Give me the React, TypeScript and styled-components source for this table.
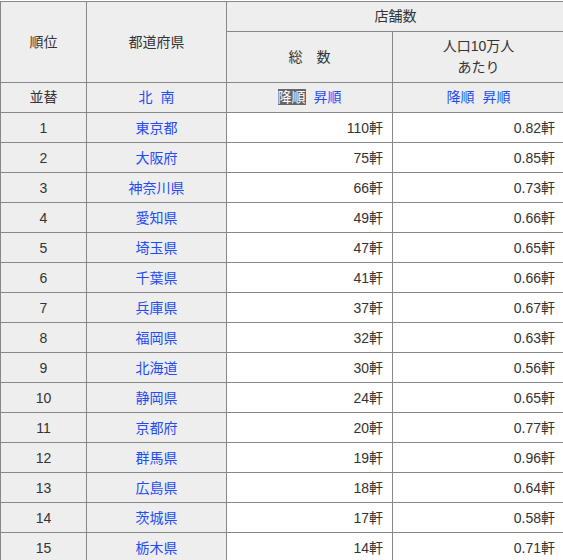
import React from "react";
import styled, { createGlobalStyle } from "styled-components";

const Global = createGlobalStyle`
  html, body { margin: 0; padding: 0; background: #fff; overflow: hidden; }
  body { font-family: "Liberation Sans", "Noto Sans CJK JP", sans-serif; font-size: 14px; line-height: 20px; color: #333; }
`;

const Wrap = styled.div`
  padding-top: 1px;
  width: 600px;
`;

const Table = styled.table`
  border-collapse: collapse;
  width: 565px;
  table-layout: fixed;
  border: 1px solid #888;
`;

const Row = styled.tr<{ $h: number }>`
  height: ${(p) => p.$h}px;
`;

const Th = styled.th`
  background: #eee;
  border: 1px solid #888;
  font-weight: normal;
  text-align: center;
  vertical-align: middle;
  padding: 0;
  line-height: 21px;
`;

const Td = styled.td<{ $gray?: boolean; $right?: boolean }>`
  background: ${(p) => (p.$gray ? "#eee" : "#fff")};
  border: 1px solid #888;
  text-align: ${(p) => (p.$right ? "right" : "center")};
  padding: ${(p) => (p.$right ? "0 9px 0 0" : "0")};
  line-height: 18px;
  vertical-align: middle;
`;

const SortLink = styled.a<{ $active?: boolean }>`
  color: ${(p) => (p.$active ? "#fff" : "#1e4cf5")};
  background: ${(p) => (p.$active ? "#666" : "transparent")};
  text-decoration: none;
  margin: 0 4px;
  cursor: pointer;
`;

const PrefLink = styled.a`
  color: #1e4cf5;
  text-decoration: none;
`;

const data: [string, number, string][] = [
  ["東京都", 110, "0.82"],
  ["大阪府", 75, "0.85"],
  ["神奈川県", 66, "0.73"],
  ["愛知県", 49, "0.66"],
  ["埼玉県", 47, "0.65"],
  ["千葉県", 41, "0.66"],
  ["兵庫県", 37, "0.67"],
  ["福岡県", 32, "0.63"],
  ["北海道", 30, "0.56"],
  ["静岡県", 24, "0.65"],
  ["京都府", 20, "0.77"],
  ["群馬県", 19, "0.96"],
  ["広島県", 18, "0.64"],
  ["茨城県", 17, "0.58"],
  ["栃木県", 14, "0.71"],
];

export default function App() {
  return (
    <Wrap>
      <Global />
      <Table>
        <colgroup>
          <col style={{ width: 86 }} />
          <col style={{ width: 140 }} />
          <col style={{ width: 166 }} />
          <col />
        </colgroup>
        <thead>
          <Row $h={30}>
            <Th rowSpan={2}>順位</Th>
            <Th rowSpan={2}>都道府県</Th>
            <Th colSpan={2}>店舗数</Th>
          </Row>
          <Row $h={51}>
            <Th>総　数</Th>
            <Th>
              人口10万人
              <br />
              あたり
            </Th>
          </Row>
          <Row $h={30}>
            <Th>並替</Th>
            <Th>
              <SortLink>北</SortLink>
              <SortLink>南</SortLink>
            </Th>
            <Th>
              <SortLink $active>降順</SortLink>
              <SortLink>昇順</SortLink>
            </Th>
            <Th>
              <SortLink>降順</SortLink>
              <SortLink>昇順</SortLink>
            </Th>
          </Row>
        </thead>
        <tbody>
          {data.map(([pref, n, per], i) => (
            <Row $h={30} key={pref}>
              <Td $gray>{i + 1}</Td>
              <Td $gray>
                <PrefLink>{pref}</PrefLink>
              </Td>
              <Td $right>{n}軒</Td>
              <Td $right>{per}軒</Td>
            </Row>
          ))}
        </tbody>
      </Table>
    </Wrap>
  );
}
